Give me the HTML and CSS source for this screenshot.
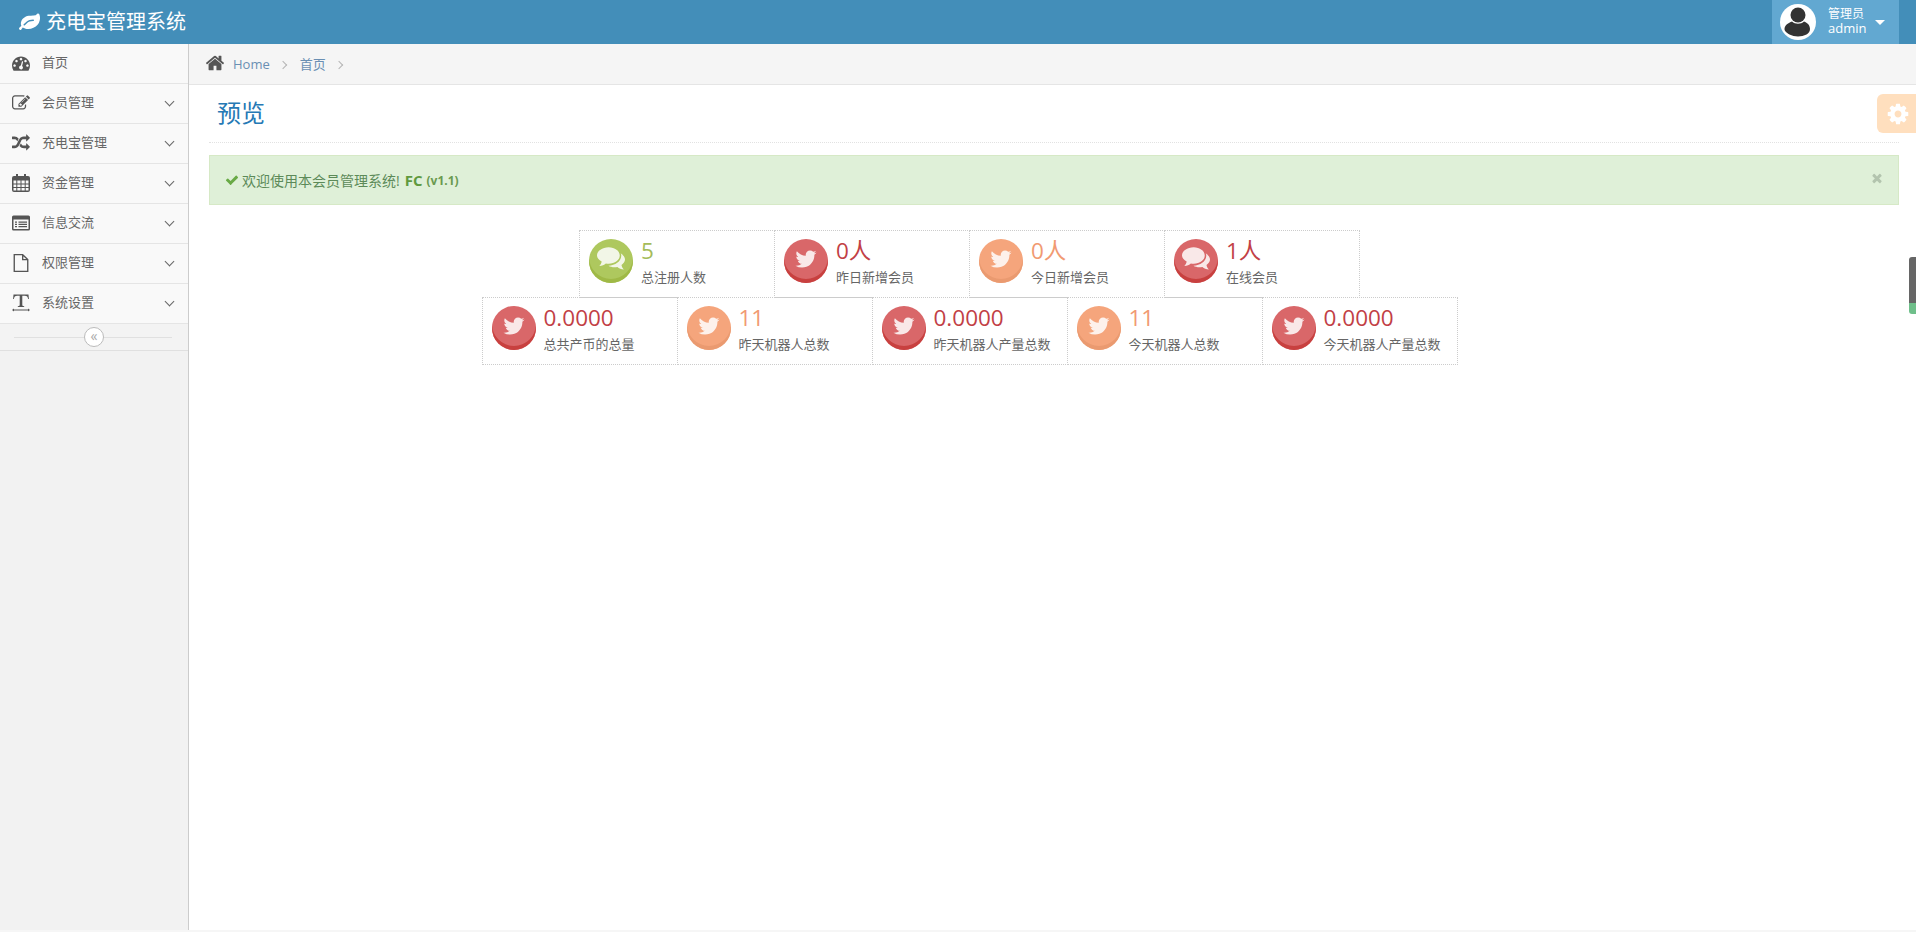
FILE: index.html
```html
<!DOCTYPE html>
<html lang="zh">
<head>
<meta charset="utf-8">
<title>充电宝管理系统</title>
<link rel="stylesheet" href="styles.css">
</head>
<body>
<svg class="sprite" xmlns="http://www.w3.org/2000/svg">
  <symbol id="i-leaf" viewBox="0 0 1792 1792"><path d="M1280 704q0-26-19-45t-45-19q-172 0-318 49.5t-259.5 134-235.5 219.5q-19 21-19 45 0 26 19 45t45 19q24 0 45-19 27-24 74-71t67-66q137-124 268.5-176t313.5-52q26 0 45-19t19-45zm512-198q0 95-20 193-46 224-184.5 383t-357.5 268q-214 108-438 108-148 0-286-47-15-5-88-42t-96-37q-16 0-39.5 32t-45 70-52.5 70-60 32q-43 0-63.5-17.5t-45.5-59.5q-2-4-6-11t-5.5-10-3-9.5-1.5-13.5q0-35 31-73.5t68-65.5 68-56 31-48q0-4-14-38t-16-44q-9-51-9-104 0-115 43.5-220t119-184.5 170.5-139 204-95.5q55-18 145-25.5t179.5-9 178.5-6 163.5-24 113.5-56.5l29.5-29.5 29.5-28 27-20 36.5-16 43.5-4.5q39 0 70.5 46t47.5 112 24 124 8 96z"/></symbol>
  <symbol id="i-dash" viewBox="0 0 1792 1792"><path d="M384 1152q0-53-37.5-90.5t-90.5-37.5-90.5 37.5-37.5 90.5 37.5 90.5 90.5 37.5 90.5-37.5 37.5-90.5zm192-448q0-53-37.5-90.5t-90.5-37.5-90.5 37.5-37.5 90.5 37.5 90.5 90.5 37.5 90.5-37.5 37.5-90.5zm428 481l101-382q6-26-7.5-48.5t-38.5-29.5-48 6.5-30 39.5l-101 382q-60 5-107 43.5t-63 98.5q-20 77 20 146t117 89 146-20 89-117q16-60-6-117t-72-91zm660-33q0-53-37.5-90.5t-90.5-37.5-90.5 37.5-37.5 90.5 37.5 90.5 90.5 37.5 90.5-37.5 37.5-90.5zm-640-640q0-53-37.5-90.5t-90.5-37.5-90.5 37.5-37.5 90.5 37.5 90.5 90.5 37.5 90.5-37.5 37.5-90.5zm448 192q0-53-37.5-90.5t-90.5-37.5-90.5 37.5-37.5 90.5 37.5 90.5 90.5 37.5 90.5-37.5 37.5-90.5zm320 448q0 261-141 483-19 29-54 29h-1402q-35 0-54-29-141-221-141-483 0-182 71-348t191-286 286-191 348-71 348 71 286 191 191 286 71 348z"/></symbol>
  <symbol id="i-edit" viewBox="0 0 1792 1792"><path d="M888 1184l116-116-152-152-116 116v56h96v96h56zm440-720q-16-16-33 1l-350 350q-17 17-1 33t33-1l350-350q17-17 1-33zm80 594v190q0 119-84.5 203.5t-203.5 84.5h-832q-119 0-203.5-84.5t-84.5-203.5v-832q0-119 84.5-203.5t203.5-84.5h832q63 0 117 25 15 7 18 23 3 17-9 29l-49 49q-14 14-32 8-23-6-45-6h-832q-66 0-113 47t-47 113v832q0 66 47 113t113 47h832q66 0 113-47t47-113v-126q0-13 9-22l64-64q15-15 35-7t20 29zm-96-738l288 288-672 672h-288v-288zm444 132l-92 92-288-288 92-92q28-28 68-28t68 28l152 152q28 28 28 68t-28 68z"/></symbol>
  <symbol id="i-random" viewBox="0 0 1792 1792"><path d="M666 481q-60 92-137 273-22-45-37-72.5t-40.5-63.5-51-56.5-63-35-81.5-14.5h-224q-14 0-23-9t-9-23v-192q0-14 9-23t23-9h224q250 0 410 225zm1126 799q0 14-9 23l-320 320q-9 9-23 9-13 0-22.5-9.5t-9.5-22.5v-192q-32 0-85 .5t-81 1-73-1-71-5-64-10.5-63-18.5-58-28.5-59-40-55-53.5-56-69.5q59-93 136-273 22 45 37 72.5t40.5 63.5 51 56.5 63 35 81.5 14.5h256v-192q0-14 9-23t23-9q12 0 24 10l319 319q9 9 9 23zm0-896q0 14-9 23l-320 320q-9 9-23 9-13 0-22.5-9.5t-9.5-22.5v-192h-256q-48 0-87 15t-69 45-51 61.5-45 77.5q-32 62-78 171-29 66-49.5 111t-54 105-64 100-74 83-90 68.5-106.5 42-128 16.5h-224q-14 0-23-9t-9-23v-192q0-14 9-23t23-9h224q48 0 87-15t69-45 51-61.5 45-77.5q32-62 78-171 29-66 49.5-111t54-105 64-100 74-83 90-68.5 106.5-42 128-16.5h256v-192q0-14 9-23t23-9q12 0 24 10l319 319q9 9 9 23z"/></symbol>
  <symbol id="i-cal" viewBox="0 0 18 18"><path fill-rule="evenodd" d="M4 0h2v2h6V0h2v2h2a2 2 0 0 1 2 2v12a2 2 0 0 1-2 2H2a2 2 0 0 1-2-2V4a2 2 0 0 1 2-2h2zM1.500 6.500v3h2.800v-3zm3.800 0v3h3.200v-3zm4.200 0v3h3.200v-3zm4.200 0v3h2.800v-3zm-12.200 4v2.500h2.800v-2.500zm3.800 0v2.500h3.200v-2.500zm4.200 0v2.500h3.200v-2.500zm4.200 0v2.500h2.800v-2.500zm-12.200 3.500v2.500h2.800V14zm3.800 0v2.500h3.200V14zm4.200 0v2.500h3.200V14zm4.200 0v2.500h2.800V14z"/></symbol>
  <symbol id="i-list" viewBox="0 0 18 15"><path fill-rule="evenodd" d="M1.500 0h15A1.500 1.500 0 0 1 18 1.500v12a1.500 1.500 0 0 1-1.500 1.500h-15A1.500 1.500 0 0 1 0 13.500v-12A1.500 1.500 0 0 1 1.500 0zM1.500 4v9.500h15V4zM3 6h2v1.300H3zm3.500 0H15v1.300H6.500zM3 8.200h2v1.300H3zm3.500 0H15v1.300H6.500zM3 10.400h2v1.300H3zm3.500 0H15v1.300H6.500z"/></symbol>
  <symbol id="i-file" viewBox="0 0 14 16"><path fill="none" stroke="currentColor" stroke-width="1.200" d="M1 .6h7.500L13 5v10.400H1zM8.500.6V5H13"/></symbol>
  <symbol id="i-text" viewBox="0 0 18 17"><path d="M1.500 0h15l.4 4.500h-.8c-.4-2-1-3.200-3.400-3.200H10.300v9c0 1 .3 1.300 1.900 1.400v.8H5.800v-.8c1.600-.1 1.900-.4 1.900-1.400v-9H5.300c-2.400 0-3 1.200-3.400 3.200h-.8z"/><path d="M0 15.500l2-1.500v1h14v-1l2 1.500-2 1.500v-1H2v1z"/></symbol>
  <symbol id="i-home" viewBox="0 0 1792 1792"><path d="M1472 992v480q0 26-19 45t-45 19h-384v-384h-256v384h-384q-26 0-45-19t-19-45v-480q0-1 .5-3t.5-3l575-474 575 474q1 2 1 6zm223-69l-62 74q-8 9-21 11h-3q-13 0-21-7l-692-577-692 577q-12 8-24 7-13-2-21-11l-62-74q-8-10-7-23.500t11-21.500l719-599q32-26 76-26t76 26l244 204v-195q0-14 9-23t23-9h192q14 0 23 9t9 23v408l219 182q10 8 11 21.500t-7 23.500z"/></symbol>
  <symbol id="i-cog" viewBox="0 0 1792 1792"><path d="M1152 896q0-106-75-181t-181-75-181 75-75 181 75 181 181 75 181-75 75-181zm512-109v222q0 12-8 23t-20 13l-185 28q-19 54-39 91 35 50 107 138 10 12 10 25t-9 23q-27 37-99 108t-94 71q-12 0-26-9l-138-108q-44 23-91 38-16 136-29 186-7 28-36 28h-222q-14 0-24.500-8.500t-11.500-21.500l-28-184q-49-16-90-37l-141 107q-10 9-25 9-14 0-25-11-126-114-165-168-7-10-7-23 0-12 8-23 15-21 51-66.500t54-70.500q-27-50-41-99l-183-27q-13-2-21-12.500t-8-23.500v-222q0-12 8-23t19-13l186-28q14-46 39-92-40-57-107-138-10-12-10-24 0-10 9-23 26-36 98.500-107.500t94.500-71.500q13 0 26 10l138 107q44-23 91-38 16-136 29-186 7-28 36-28h222q14 0 24.500 8.500t11.500 21.500l28 184q49 16 90 37l142-107q9-9 24-9 13 0 25 10 129 119 165 170 7 8 7 22 0 12-8 23-15 21-51 66.500t-54 70.500q26 50 41 98l183 28q13 2 21 12.500t8 23.500z"/></symbol>
  <symbol id="i-check" viewBox="0 0 1792 1792"><path d="M1671 566q0 40-28 68l-724 724-136 136q-28 28-68 28t-68-28l-136-136-362-362q-28-28-28-68t28-68l136-136q28-28 68-28t68 28l294 295 656-657q28-28 68-28t68 28l136 136q28 28 28 68z"/></symbol>
  <symbol id="i-times" viewBox="0 0 1792 1792"><path d="M1490 1322q0 40-28 68l-136 136q-28 28-68 28t-68-28l-294-294-294 294q-28 28-68 28t-68-28l-136-136q-28-28-28-68t28-68l294-294-294-294q-28-28-28-68t28-68l136-136q28-28 68-28t68 28l294 294 294-294q28-28 68-28t68 28l136 136q28 28 28 68t-28 68l-294 294 294 294q28 28 28 68z"/></symbol>
  <symbol id="i-twitter" viewBox="0 0 1792 1792"><path d="M1684 408q-67 98-162 167 1 14 1 42 0 130-38 259.500t-115.500 248.500-184.500 210.500-258 146-323 54.500q-271 0-496-145 35 4 76 4 225 0 401-138-105-2-188-64.500t-114-159.500q33 5 61 5 43 0 85-11-112-23-185.500-111.500t-73.500-205.500v-4q68 38 146 41-66-44-105-115t-39-154q0-88 44-163 121 149 294.500 238.500t371.500 99.500q-8-38-8-74 0-134 94.500-228.500t228.500-94.500q140 0 236 102 109-21 205-78-37 115-142 178 107-11 186-54z"/></symbol>
  <symbol id="i-comments" viewBox="0 0 24 20"><path d="M10 0c5.300 0 9.500 3.100 9.500 7s-4.200 7-9.500 7c-.8 0-1.600-.1-2.400-.2C6.300 15 4.300 15.700 2 16c1-1 1.800-2.300 2-3.900C1.600 10.800 0 9 0 7c0-3.900 4.500-7 10-7z"/><path d="M20.800 5.600c1.900 1.200 3.200 2.900 3.200 4.900 0 1.900-1.300 3.500-3 4.600.2 1.500 1 2.800 2 3.900-2.200-.3-4.200-1-5.500-2.200-.8.200-1.700.2-2.500.2-2 0-3.800-.5-5.200-1.300 5.800-.2 10.700-3.600 11-8.300 0-.9-.1-1.900-.5-2.800z"/></symbol>
  <symbol id="i-user" viewBox="0 0 36 36"><circle cx="18" cy="18" r="18" fill="#fff"/><circle cx="18" cy="11" r="7.500" fill="#333"/><path fill="#333" d="M12 17.500c3 3 9 3 12 0 3.500 1.200 6 3.800 6 7.500 0 2.500-1.500 4.200-3.500 5.500-5 2.500-12 2.500-17 0C7.500 29.200 4.500 27.500 4.500 25c0-3.700 4-6.300 7.500-7.500z"/></symbol>
</svg>

<header class="navbar">
  <div class="brand">
    <svg class="brand-icon"><use href="#i-leaf"/></svg>
    <span>充电宝管理系统</span>
  </div>
  <div class="user-nav">
    <svg class="avatar"><use href="#i-user"/></svg>
    <div class="user-info"><span class="user-role">管理员</span><span class="user-name">admin</span></div>
    <span class="caret"></span>
  </div>
</header>

<div class="layout">
  <aside class="sidebar">
    <ul class="menu">
      <li class="menu-item"><svg class="menu-icon"><use href="#i-dash"/></svg><span class="menu-text">首页</span></li>
      <li class="menu-item"><svg class="menu-icon"><use href="#i-edit"/></svg><span class="menu-text">会员管理</span><span class="chev"></span></li>
      <li class="menu-item"><svg class="menu-icon"><use href="#i-random"/></svg><span class="menu-text">充电宝管理</span><span class="chev"></span></li>
      <li class="menu-item"><svg class="menu-icon"><use href="#i-cal"/></svg><span class="menu-text">资金管理</span><span class="chev"></span></li>
      <li class="menu-item"><svg class="menu-icon"><use href="#i-list"/></svg><span class="menu-text">信息交流</span><span class="chev"></span></li>
      <li class="menu-item"><svg class="menu-icon"><use href="#i-file"/></svg><span class="menu-text">权限管理</span><span class="chev"></span></li>
      <li class="menu-item"><svg class="menu-icon"><use href="#i-text"/></svg><span class="menu-text">系统设置</span><span class="chev"></span></li>
    </ul>
    <div class="collapse"><span class="collapse-btn">«</span></div>
  </aside>

  <main class="main">
    <nav class="breadcrumb">
      <svg class="home-icon"><use href="#i-home"/></svg>
      <a class="crumb">Home</a><span class="sep"></span>
      <a class="crumb">首页</a><span class="sep"></span>
    </nav>
    <div class="content">
      <h1 class="page-title">预览</h1>
      <div class="alert">
        <svg class="check"><use href="#i-check"/></svg>
        <span>欢迎使用本会员管理系统!</span>
        <strong class="alert-fc">FC</strong>
        <small class="alert-ver">(v1.1)</small>
        <svg class="close"><use href="#i-times"/></svg>
      </div>
      <div class="stats">
        <div class="stat-row">
          <div class="stat"><div class="coin green"><svg><use href="#i-comments"/></svg></div><div class="stat-body"><div class="num t-green">5</div><div class="label">总注册人数</div></div></div>
          <div class="stat"><div class="coin red"><svg><use href="#i-twitter"/></svg></div><div class="stat-body"><div class="num t-red">0人</div><div class="label">昨日新增会员</div></div></div>
          <div class="stat"><div class="coin orange"><svg><use href="#i-twitter"/></svg></div><div class="stat-body"><div class="num t-orange">0人</div><div class="label">今日新增会员</div></div></div>
          <div class="stat"><div class="coin red"><svg><use href="#i-comments"/></svg></div><div class="stat-body"><div class="num t-red">1人</div><div class="label">在线会员</div></div></div>
        </div>
        <div class="stat-row">
          <div class="stat"><div class="coin red"><svg><use href="#i-twitter"/></svg></div><div class="stat-body"><div class="num t-red">0.0000</div><div class="label">总共产币的总量</div></div></div>
          <div class="stat"><div class="coin orange"><svg><use href="#i-twitter"/></svg></div><div class="stat-body"><div class="num t-orange">11</div><div class="label">昨天机器人总数</div></div></div>
          <div class="stat"><div class="coin red"><svg><use href="#i-twitter"/></svg></div><div class="stat-body"><div class="num t-red">0.0000</div><div class="label">昨天机器人产量总数</div></div></div>
          <div class="stat"><div class="coin orange"><svg><use href="#i-twitter"/></svg></div><div class="stat-body"><div class="num t-orange">11</div><div class="label">今天机器人总数</div></div></div>
          <div class="stat"><div class="coin red"><svg><use href="#i-twitter"/></svg></div><div class="stat-body"><div class="num t-red">0.0000</div><div class="label">今天机器人产量总数</div></div></div>
        </div>
      </div>
    </div>
  </main>
</div>

<div class="settings"><svg><use href="#i-cog"/></svg></div>
<div class="side-handle"></div>
</body>
</html>
```

FILE: styles.css
```css
* { box-sizing: border-box; }
html, body { margin: 0; height: 932px; overflow: hidden; }
body {
  position: relative;
  display: flex;
  flex-direction: column;
  font-family: "Open Sans", "Noto Sans CJK SC", sans-serif;
  font-size: 13px;
  color: #393939;
  background: #f6f6f6;
}
.sprite { display: none; }

.navbar {
  flex: none;
  height: 44px;
  display: flex;
  justify-content: space-between;
  background: #438eb9;
  color: #fff;
  padding-right: 17px;
}
.brand { display: flex; align-items: center; padding-left: 19px; font-size: 20px; line-height: 24px; gap: 6px; }
.brand-icon { width: 21px; height: 21px; fill: #fff; }
.user-nav {
  width: 127px;
  display: flex;
  align-items: center;
  padding-left: 8px;
  background: #62a8d1;
}
.avatar { width: 36px; height: 36px; flex: none; }
.user-info { display: flex; flex-direction: column; margin: -2px 0 0 12px; line-height: 15px; }
.user-role { font-size: 12px; }
.user-name { font-size: 13px; }
.caret { margin-left: 9px; border: 5px solid transparent; border-top-color: #fff; border-bottom-width: 0; border-left-width: 5.500px; border-right-width: 5.500px; }

.layout { flex: 1; display: flex; min-height: 0; margin-bottom: 2px; }
.sidebar { flex: none; width: 189px; background: #f2f2f2; border-right: 1px solid #ccc; }
.menu { list-style: none; margin: 0; padding: 0; }
.menu-item {
  height: 40px;
  display: flex;
  align-items: center;
  padding: 0 13px 2px 12px;
  background: #f9f9f9;
  border-bottom: 1px solid #e5e5e5;
  color: #666;
}
.menu-icon { width: 18px; height: 18px; flex: none; fill: #555; color: #555; }
.menu-text { margin: -2px 0 0 12px; flex: 1; line-height: 18px; }
.chev { width: 7px; height: 7px; margin: 0 2px 3px 0; border-right: 1.500px solid #666; border-bottom: 1.500px solid #666; transform: rotate(45deg); }
.collapse {
  height: 27px;
  position: relative;
  display: flex;
  justify-content: center;
  align-items: center;
  background: #f3f3f3;
  border-bottom: 1px solid #e0e0e0;
}
.collapse::before { content: ""; position: absolute; left: 14px; right: 16px; top: 13px; border-top: 1px solid #e0e0e0; }
.collapse-btn {
  position: relative;
  width: 20px;
  height: 20px;
  border-radius: 50%;
  border: 1px solid #bbb;
  background: #fff;
  color: #aaa;
  font-size: 14px;
  line-height: 15px;
  text-align: center;
}

.main { flex: 1; min-width: 0; display: flex; flex-direction: column; background: #fff; }
.breadcrumb {
  flex: none;
  height: 41px;
  display: flex;
  align-items: center;
  padding-left: 16px;
  background: #f5f5f5;
  border-bottom: 1px solid #e5e5e5;
}
.home-icon { width: 20px; height: 20px; fill: #555; margin-right: 8px; margin-bottom: 2px; }
.crumb { color: #6a8fb3; line-height: 18px; font-size: 13px; }
.sep { width: 6px; height: 6px; margin: 2px 14px 0 10px; border-top: 1px solid #b5b5b5; border-right: 1px solid #b5b5b5; transform: rotate(45deg); }

.content { flex: 1; padding: 0 17px 0 20px; }
.page-title {
  margin: 0;
  height: 58px;
  padding: 12px 0 0 8px;
  font-size: 24px;
  line-height: 32px;
  font-weight: 400;
  color: #2679b5;
  border-bottom: 1px dotted #e2e2e2;
}
.alert {
  position: relative;
  display: flex;
  align-items: center;
  height: 50px;
  margin-top: 12px;
  padding: 0 15px;
  gap: 3px;
  font-size: 14px;
  background: #dff0d8;
  border: 1px solid #d6e9c6;
  color: #5c8a58;
}
.check { width: 14px; height: 14px; fill: #69aa46; }
.alert-fc { font-size: 15px; color: #5f9a3e; margin-left: 2px; }
.alert-ver { font-size: 12px; font-weight: 700; color: #6a9a50; margin-left: 1px; }
.close { position: absolute; right: 14px; top: 15px; width: 14px; height: 14px; fill: #b3c4ae; }

.stats { margin: 25px 169px 0 0; display: flex; flex-direction: column; align-items: center; }
.stat-row { display: flex; }
.stat-row + .stat-row { margin-top: -1px; }
.stat {
  width: 196px;
  height: 68px;
  margin-left: -1px;
  display: flex;
  padding: 8px 0 0 9px;
  border: 1px dotted #ccc;
}
.stat:first-child { margin-left: 0; }
.coin { width: 44px; height: 44px; flex: none; border-radius: 50%; display: flex; align-items: center; justify-content: center; padding-bottom: 4px; }
.coin svg { width: 28px; height: 24px; fill: #fff; opacity: .85; }
.red { background: #d96769; box-shadow: inset 0 -4px 0 #c8403f; }
.orange { background: #f5a57c; box-shadow: inset 0 -4px 0 #ea9a70; }
.green { background: #aec85e; box-shadow: inset 0 -4px 0 #9fb946; }
.stat-body { margin-left: 8px; }
.num { font-size: 22.500px; line-height: 26px; height: 27px; margin-top: -1px; }
.t-red { color: #c23f46; }
.t-orange { color: #f19a72; }
.t-green { color: #a5bc5a; }
.label { font-size: 13px; line-height: 18px; color: #666; margin-top: 3px; }

.settings {
  position: absolute;
  right: 0;
  top: 94px;
  width: 39px;
  height: 39px;
  background: #ffdfbe;
  border-radius: 6px 0 0 6px;
  display: flex;
  align-items: center;
  justify-content: center;
  padding: 0 0 0 2px;
}
.settings svg { width: 24px; height: 24px; fill: #fff; }
.side-handle {
  position: absolute;
  right: 0;
  top: 257px;
  width: 7px;
  height: 57px;
  border-radius: 3px 0 0 3px;
  background: linear-gradient(#666 0 80%, #6fbf8a 80% 100%);
}
```
